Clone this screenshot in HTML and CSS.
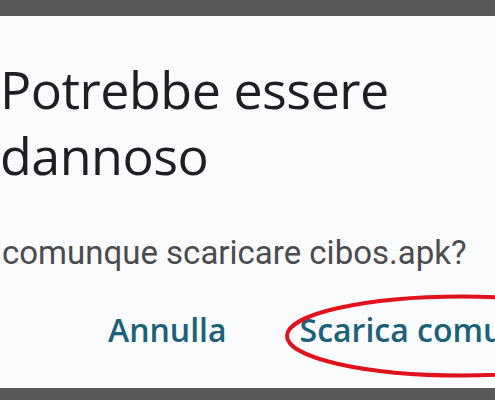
FILE: index.html
```html
<!DOCTYPE html>
<html lang="it">
<head>
    <meta charset="UTF-8">
    <title>Potrebbe essere dannoso</title>
    <link rel="stylesheet" href="styles.css">
</head>
<body>

    <div class="bar"></div>

    <div class="dialog">
        <h2 class="title">Potrebbe essere dannoso</h2>
        <p class="message">comunque scaricare cibos.apk?</p>
        <div class="actions">
            <button class="action">Annulla</button>
            <button class="action action-marked">
                Scarica comunque
                <svg class="circle" width="360" height="94" viewBox="0 0 360 94">
                    <ellipse cx="179" cy="47" rx="175" ry="39.5" fill="none" stroke="#e0121c" stroke-width="4"/>
                </svg>
            </button>
        </div>
    </div>

    <div class="bar bar-bottom"></div>

</body>
</html>
```

FILE: styles.css
```css
body {
    margin: 0;
    width: 495px;
    height: 400px;
    overflow: hidden;
    background: #fafbfd;
    display: flex;
    flex-direction: column;
}

.bar {
    height: 16px;
    background: #595959;
    flex-shrink: 0;
}

.bar-bottom {
    height: 12px;
    margin-top: auto;
    position: relative;
}

.dialog {
    display: flex;
    flex-direction: column;
    padding: 40px 0 0 0;
}

.title {
    margin: 0;
    width: 420px;
    font-family: "Open Sans", sans-serif;
    font-weight: 400;
    font-size: 52px;
    line-height: 66px;
    color: #1f1f23;
    letter-spacing: -0.5px;
}

.message {
    margin: 45px 0 0 2px;
    font-family: Roboto, sans-serif;
    font-size: 33px;
    line-height: 40px;
    color: #4c4c4e;
    white-space: nowrap;
}

.actions {
    display: flex;
    gap: 73px;
    margin: 37px 0 0 108px;
    white-space: nowrap;
}

.action {
    position: relative;
    padding: 0;
    border: none;
    background: none;
    font-family: "Open Sans", sans-serif;
    font-weight: 600;
    font-size: 32px;
    line-height: 40px;
    color: #1d6178;
}

.circle {
    position: absolute;
    left: -17px;
    top: -21px;
}
```
